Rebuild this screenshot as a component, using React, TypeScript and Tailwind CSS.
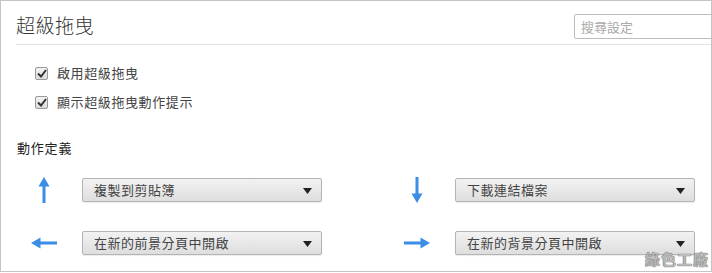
import React from "react";

const font = { fontFamily: '"Noto Sans CJK TC", "Noto Sans", sans-serif' };

function Arrow({ dir }: { dir: "up" | "down" | "left" | "right" }) {
  const rot = { up: 0, right: 90, down: 180, left: 270 }[dir];
  return (
    <svg width="28" height="28" viewBox="0 0 28 28" style={{ transform: `rotate(${rot}deg)` }}>
      <path d="M14 1 L19.5 10.5 L15.5 10.5 L15.5 27 L12.5 27 L12.5 10.5 L8.5 10.5 Z" fill="#3b8ee6" />
    </svg>
  );
}

function Select({ label }: { label: string }) {
  return (
    <div className="relative flex h-[24px] w-[240px] shrink-0 items-center rounded-[2px] border border-[#b4b4b4] bg-gradient-to-b from-[#f2f2f2] to-[#dedede] pl-[11px] text-[13px] text-[#444] shadow-[0_1px_1px_rgba(0,0,0,0.08)]">
      <span className="tracking-[0.5px]">{label}</span>
      <svg className="absolute right-[9px] top-[9px]" width="9" height="6" viewBox="0 0 9 6">
        <path d="M0 0 L9 0 L4.5 6 Z" fill="#222" />
      </svg>
    </div>
  );
}

function Check({ label }: { label: string }) {
  return (
    <div className="flex h-[16px] items-center">
      <div className="flex h-[13px] w-[13px] items-center justify-center rounded-[2px] border border-[#9a9a9a] bg-gradient-to-b from-[#f4f4f4] to-[#dcdcdc]">
        <svg width="10" height="9" viewBox="0 0 10 9">
          <path d="M1 4.5 L4 7.5 L9 1" stroke="#333" strokeWidth="2" fill="none" />
        </svg>
      </div>
      <span className="ml-[9px] text-[13px] tracking-[0.6px] text-[#444]">{label}</span>
    </div>
  );
}

function Row({ dir, label }: { dir: "up" | "down" | "left" | "right"; label: string }) {
  return (
    <div className="flex h-[24px] items-center">
      <div className="flex w-[66px] justify-center pr-[10px]"><Arrow dir={dir} /></div>
      <Select label={label} />
    </div>
  );
}

export default function App() {
  return (
    <div className="h-[273px] w-[712px] overflow-hidden bg-white" style={font}>
      <div className="relative h-[272px] w-[712px] border border-[#c4c4c4]">
        <div className="ml-[15px] flex h-[44px] items-start justify-between border-b border-[#e3e3e3]">
          <div className="mt-[10px] text-[19px] font-light tracking-[0.5px] text-[#333]">超級拖曳</div>
          <div className="-mr-[2px] mt-[13px] flex h-[25px] w-[139px] items-center rounded-[2px] border border-[#bdbdbd] pl-[6px] text-[13px] text-[#aaa]">
            搜尋設定
          </div>
        </div>
        <div className="ml-[34px] mt-[20px] flex flex-col gap-[13px]">
          <Check label="啟用超級拖曳" />
          <Check label="顯示超級拖曳動作提示" />
        </div>
        <div className="ml-[16px] mt-[28px] text-[13px] tracking-[0.8px] text-[#222]">動作定義</div>
        <div className="ml-[15px] mt-[20px] grid grid-cols-[373px_373px] gap-y-[29px]">
          <Row dir="up" label="複製到剪貼簿" />
          <Row dir="down" label="下載連結檔案" />
          <Row dir="left" label="在新的前景分頁中開啟" />
          <Row dir="right" label="在新的背景分頁中開啟" />
        </div>
        <div
          className="absolute bottom-[1px] right-[2px] text-[15px] font-bold tracking-[1px] text-[#bbb]"
          style={{ textShadow: "0 0 1px #666, 0 0 1px #666" }}
        >
          綠色工廠
        </div>
      </div>
    </div>
  );
}
